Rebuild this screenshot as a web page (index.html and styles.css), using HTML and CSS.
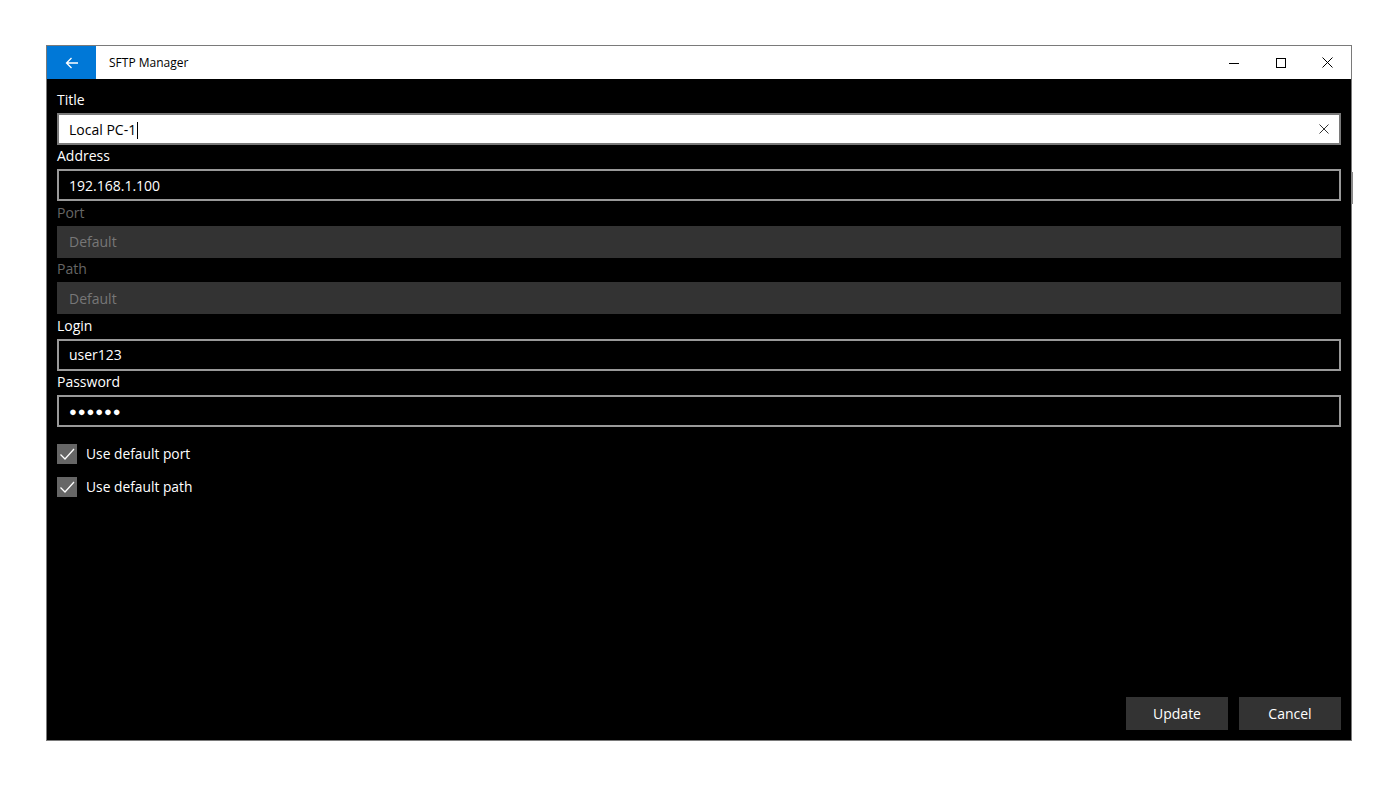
FILE: index.html
```html
<!DOCTYPE html>
<html lang="en">
<head>
  <meta charset="UTF-8">
  <title>SFTP Manager</title>
  <link rel="stylesheet" href="styles.css">
</head>
<body>

<div class="window">
  <div class="titlebar">
    <div class="back">
      <svg width="14" height="14" viewBox="0 0 14 14"><path d="M13 7H1.5M6.5 2 1.5 7l5 5" fill="none" stroke="#fff" stroke-width="1.3"/></svg>
    </div>
    <span class="app-title">SFTP Manager</span>
    <div class="caption">
      <span class="cap-btn"><svg width="10" height="10" viewBox="0 0 10 10"><path d="M0 5.5h10" stroke="#000" stroke-width="1"/></svg></span>
      <span class="cap-btn"><svg width="10" height="10" viewBox="0 0 10 10"><rect x="0.5" y="0.5" width="9" height="9" fill="none" stroke="#000" stroke-width="1"/></svg></span>
      <span class="cap-btn"><svg width="11" height="11" viewBox="0 0 11 11"><path d="M0.5 0.5l10 10M10.5 0.5l-10 10" stroke="#000" stroke-width="1"/></svg></span>
    </div>
  </div>

  <div class="content">
    <div class="field">
      <label>Title</label>
      <div class="box focused">
        <span>Local PC-1<span class="caret"></span></span>
        <svg class="clear" width="10" height="10" viewBox="0 0 10 10"><path d="M0.5 0.5l9 9M9.5 0.5l-9 9" stroke="#333" stroke-width="1"/></svg>
      </div>
    </div>
    <div class="field">
      <label>Address</label>
      <div class="box">192.168.1.100</div>
    </div>
    <div class="field disabled">
      <label>Port</label>
      <div class="box">Default</div>
    </div>
    <div class="field disabled">
      <label>Path</label>
      <div class="box">Default</div>
    </div>
    <div class="field">
      <label>Login</label>
      <div class="box">user123</div>
    </div>
    <div class="field">
      <label>Password</label>
      <div class="box dots">&#9679;&#9679;&#9679;&#9679;&#9679;&#9679;</div>
    </div>

    <div class="checks">
      <div class="check">
        <span class="tick"><svg width="20" height="20" viewBox="0 0 20 20"><path d="M3.5 10.5l4.5 4.5 9-10" fill="none" stroke="#fff" stroke-width="1.3"/></svg></span>
        Use default port
      </div>
      <div class="check">
        <span class="tick"><svg width="20" height="20" viewBox="0 0 20 20"><path d="M3.5 10.5l4.5 4.5 9-10" fill="none" stroke="#fff" stroke-width="1.3"/></svg></span>
        Use default path
      </div>
    </div>

    <div class="actions">
      <button>Update</button>
      <button>Cancel</button>
    </div>
  </div>
  <div class="scroll-thumb"></div>
</div>

</body>
</html>
```

FILE: styles.css
```css
* {
  box-sizing: border-box;
  font-family: "Open Sans", "Noto Sans", sans-serif;
}

html, body {
  margin: 0;
  padding: 0;
  background-color: #fff;
}

body {
  padding: 45px 0 0 46px;
}

.window {
  position: relative;
  width: 1306px;
  height: 696px;
  border: 1px solid #7a7a7a;
  background-color: #000;
  display: flex;
  flex-direction: column;
}

.titlebar {
  height: 33px;
  background-color: #fff;
  display: flex;
  align-items: center;
}

.back {
  width: 49px;
  height: 33px;
  background-color: #0078d7;
  display: flex;
  justify-content: center;
  align-items: center;
}

.app-title {
  font-size: 12px;
  color: #000;
  margin-left: 13px;
  flex: 1;
}

.caption {
  display: flex;
  height: 33px;
}

.cap-btn {
  width: 47px;
  display: flex;
  justify-content: center;
  align-items: center;
}

.content {
  flex: 1;
  display: flex;
  flex-direction: column;
  padding: 11px 10px 10px 10px;
}

.field label {
  display: block;
  font-size: 14px;
  color: #fff;
  height: 19px;
  line-height: 19px;
  margin-bottom: 4px;
}

.field + .field {
  margin-top: 1.4px;
}

.box {
  height: 32px;
  border: 2px solid #999;
  font-size: 14px;
  color: #fff;
  padding: 0 10px;
  display: flex;
  align-items: center;
  justify-content: space-between;
}

.box.focused {
  background-color: #fff;
  color: #000;
  border-color: #7a7a7a;
}

.caret {
  display: inline-block;
  width: 1px;
  height: 17px;
  background-color: #000;
  vertical-align: -4px;
  margin-left: 1px;
}

.disabled label {
  color: #666;
}

.disabled .box {
  background-color: #333;
  border-color: #333;
  color: #777;
}

.dots {
  font-size: 13px;
  letter-spacing: 0.9px;
}

.checks {
  margin-top: 17px;
  display: flex;
  flex-direction: column;
  gap: 13px;
}

.check {
  display: flex;
  align-items: center;
  font-size: 13.8px;
  color: #fff;
}

.tick {
  width: 20px;
  height: 20px;
  background-color: #666;
  margin-right: 9px;
  display: flex;
}

.actions {
  margin-top: auto;
  display: flex;
  justify-content: flex-end;
  gap: 11px;
}

.actions button {
  width: 102px;
  height: 33px;
  background-color: #333;
  border: none;
  color: #fff;
  font-size: 14px;
}

.scroll-thumb {
  position: absolute;
  right: -2px;
  top: 126px;
  width: 2px;
  height: 32px;
  background-color: #888;
}
```
